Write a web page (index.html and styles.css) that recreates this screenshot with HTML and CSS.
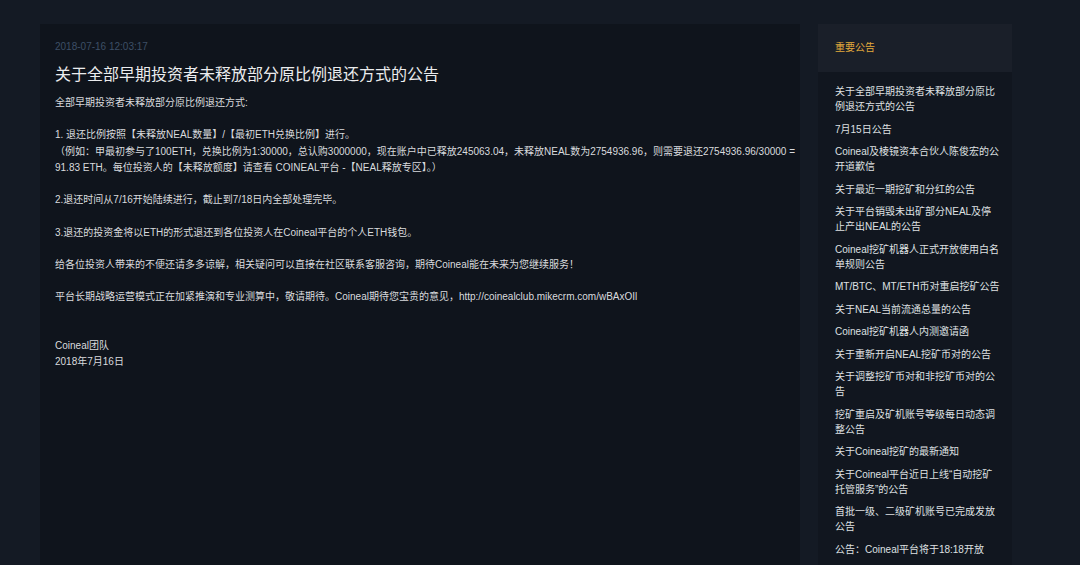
FILE: index.html
```html
<!DOCTYPE html>
<html lang="zh-CN">
<head>
  <meta charset="UTF-8" />
  <meta name="viewport" content="width=device-width, initial-scale=1.0"/>
  <title>公告详情</title>
  <link rel="stylesheet" href="styles.css">
</head>
<body>
  <div class="page">
    <div class="article">
      <div class="date">2018-07-16 12:03:17</div>
      <h1 class="title">关于全部早期投资者未释放部分原比例退还方式的公告</h1>
      <div class="content">
        <p>全部早期投资者未释放部分原比例退还方式:</p>
        <p class="blank"></p>
        <p>1. 退还比例按照【未释放NEAL数量】/【最初ETH兑换比例】进行。</p>
        <p>（例如：甲最初参与了100ETH，兑换比例为1:30000，总认购3000000，现在账户中已释放245063.04，未释放NEAL数为2754936.96，则需要退还2754936.96/30000 = 91.83 ETH。每位投资人的【未释放额度】请查看 COINEAL平台 -【NEAL释放专区】。）</p>
        <p class="blank"></p>
        <p>2.退还时间从7/16开始陆续进行，截止到7/18日内全部处理完毕。</p>
        <p class="blank"></p>
        <p>3.退还的投资金将以ETH的形式退还到各位投资人在Coineal平台的个人ETH钱包。</p>
        <p class="blank"></p>
        <p>给各位投资人带来的不便还请多多谅解，相关疑问可以直接在社区联系客服咨询，期待Coineal能在未来为您继续服务！</p>
        <p class="blank"></p>
        <p>平台长期战略运营模式正在加紧推演和专业测算中，敬请期待。Coineal期待您宝贵的意见，http://coinealclub.mikecrm.com/wBAxOIl</p>
        <p class="blank"></p>
        <p class="blank"></p>
        <p>Coineal团队</p>
        <p>2018年7月16日</p>
      </div>
    </div>

    <div class="sidebar">
      <div class="side-head">重要公告</div>
      <ul class="notice-list">
        <li>关于全部早期投资者未释放部分原比例退还方式的公告</li>
        <li>7月15日公告</li>
        <li>Coineal及棱镜资本合伙人陈俊宏的公开道歉信</li>
        <li>关于最近一期挖矿和分红的公告</li>
        <li>关于平台销毁未出矿部分NEAL及停止产出NEAL的公告</li>
        <li>Coineal挖矿机器人正式开放使用白名单规则公告</li>
        <li>MT/BTC、MT/ETH币对重启挖矿公告</li>
        <li>关于NEAL当前流通总量的公告</li>
        <li>Coineal挖矿机器人内测邀请函</li>
        <li>关于重新开启NEAL挖矿币对的公告</li>
        <li>关于调整挖矿币对和非挖矿币对的公告</li>
        <li>挖矿重启及矿机账号等级每日动态调整公告</li>
        <li>关于Coineal挖矿的最新通知</li>
        <li>关于Coineal平台近日上线“自动挖矿托管服务”的公告</li>
        <li>首批一级、二级矿机账号已完成发放公告</li>
        <li>公告：Coineal平台将于18:18开放</li>
      </ul>
    </div>
  </div>
</body>
</html>
```

FILE: styles.css
```css
html, body {
  margin: 0;
  height: 100%;
  overflow: hidden;
}
body {
  font-family: "Liberation Sans", "Noto Sans CJK SC", sans-serif;
  background-color: #141a24;
  color: #d9dbde;
}
.page {
  display: flex;
  align-items: flex-start;
  padding: 24px 0 0 40px;
  height: 100%;
  box-sizing: border-box;
}
.article {
  width: 760px;
  height: 100%;
  background: #0f141c;
  padding: 15px 4px 0 15px;
  box-sizing: border-box;
}
.date {
  font-size: 10px;
  line-height: 16px;
  color: #3d4f66;
}
.title {
  margin: 8px 0 8px;
  font-size: 16px;
  line-height: 24px;
  font-weight: normal;
  color: #ebecee;
}
.content {
  font-size: 10px;
  line-height: 16.2px;
}
.content p {
  margin: 0;
}
.content .blank {
  height: 16.2px;
}
.sidebar {
  width: 194px;
  margin-left: 18px;
  height: 100%;
  background: #11161f;
}
.side-head {
  height: 48px;
  line-height: 48px;
  padding-left: 17px;
  font-size: 10px;
  color: #e3aa3c;
  background: #1a1f29;
}
.notice-list {
  list-style: none;
  margin: 0;
  padding: 12px 11px 0 17px;
  font-size: 10px;
  line-height: 15px;
}
.notice-list li {
  margin-bottom: 7.5px;
  color: #dfe0e2;
}
```
